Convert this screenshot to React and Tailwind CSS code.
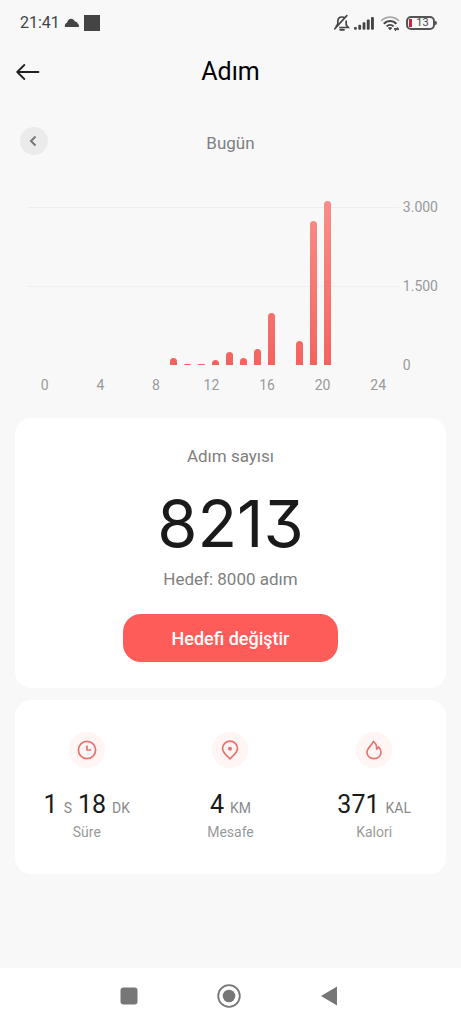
const MAX_STEPS = 3000

const hourlySteps = [
  0, 0, 0, 0, 0, 0, 0, 0, 0, 125, 20, 10, 95, 240, 140, 310, 990, 0, 460, 2730, 3110, 0, 0, 0,
]

const hourLabels = [0, 4, 8, 12, 16, 20, 24]
const stepLabels = ['3.000', '1.500', '0']

function StatusBar() {
  return (
    <div className="flex h-[46px] items-center justify-between px-5 text-[#444]">
      <div className="flex items-center">
        <span className="text-base leading-5">21:41</span>
        <svg className="ml-1 h-4 w-4" viewBox="0 0 16 16" fill="currentColor">
          <path d="M1 12C.4 9.800 1.300 8.200 3 7.700 3.800 5.200 5.300 3.700 7 3.700c1.800 0 3 1 3.900 2.700 1.700.3 2.600 1.100 2.900 2.300 1 .4 1.400 1.700 1 3.300z" />
        </svg>
        <span className="ml-1 h-4 w-4 bg-[#444]" />
      </div>

      <div className="flex items-center pr-1">
        {/* Muted bell */}
        <svg className="h-[18px] w-[18px]" viewBox="0 0 18 18" fill="none" stroke="currentColor" strokeWidth="1.700">
          <path d="M4.800 10V7.400C4.800 4.800 6.500 3 9 3c1.300 0 2.300.4 3 1.200M13.200 6.500v4.500l2 2.500H6.200" />
          <path d="M1.800 14.800 13.800 1.600" strokeLinecap="round" />
          <path d="M7.300 15.800h3.600" strokeWidth="2" strokeLinecap="round" />
          <path d="M5 10 2.800 12.800" />
        </svg>
        {/* Signal */}
        <svg className="ml-[3px] h-4 w-5" viewBox="0 0 20 16" fill="currentColor">
          <rect x="0" y="12" width="2.800" height="2.800" rx="1" />
          <rect x="4.300" y="9.800" width="2.800" height="5" rx="1" />
          <rect x="8.600" y="7.200" width="2.800" height="7.600" rx="1" />
          <rect x="12.800" y="4.600" width="2.900" height="10.200" rx="1" />
          <rect x="17" y="2" width="2.900" height="12.800" rx="1" />
        </svg>
        {/* Wi-Fi */}
        <svg className="ml-[6px] h-4 w-[22px]" viewBox="0 0 22 16" fill="none" stroke="currentColor">
          <path d="M1.200 6c4.800-5.200 13-5.200 17.800 0" stroke="#aaa" strokeWidth="1.800" />
          <path d="M3.800 8.700c3.500-3.600 9.100-3.600 12.600 0" strokeWidth="2.200" />
          <path d="M6.600 11.400c2-2 5-2 7 0" strokeWidth="2" />
          <path d="M7.900 13c1.300-1.200 3.100-1.200 4.400 0l-2.200 2.200z" fill="currentColor" stroke="none" />
          <path d="M14 13.600h4.500l-1.800-1.600M19 14.600h-4.500l1.600 1.400" strokeWidth="1" />
        </svg>
        {/* Battery */}
        <span className="ml-1 flex h-[14px] w-[29px] items-center rounded-[5px] border-2 border-[#555] pl-px">
          <span className="h-2 w-[3px] bg-[#c8283c]" />
          <span className="flex-1 text-center text-[11px] leading-[10px]">13</span>
        </span>
        <span className="h-1 w-[2px] rounded-r bg-[#555]" />
      </div>
    </div>
  )
}

function StepChart() {
  return (
    <section className="mt-11">
      <div className="flex h-[174px] pl-[27px] pr-[23px]">
        <div className="relative my-2 flex-1">
          <div className="absolute inset-0 flex flex-col justify-between">
            <div className="h-px bg-[#efefef]" />
            <div className="h-px bg-[#efefef]" />
            <div className="h-px" />
          </div>
          <div className="relative flex h-full items-end pl-[14px] pr-[23px]">
            {hourlySteps.map((steps, hour) => (
              <div key={hour} className="flex h-full flex-1 items-end justify-center">
                <div
                  className="w-[7px] rounded-t-full bg-[#f5625d] bg-linear-to-t from-[#f5625d] to-[#f98e89] bg-[length:100%_164px] bg-bottom bg-no-repeat"
                  style={{ height: `${(steps / MAX_STEPS) * 100}%` }}
                />
              </div>
            ))}
          </div>
        </div>
        <div className="ml-1 flex flex-col justify-between text-sm leading-4 text-[#9a9a9a]">
          {stepLabels.map((label) => (
            <span key={label}>{label}</span>
          ))}
        </div>
      </div>
      <div className="mt-1 grid grid-cols-7 pl-[17px] pr-[55px] text-center text-sm leading-4 text-[#9a9a9a]">
        {hourLabels.map((hour) => (
          <span key={hour}>{hour}</span>
        ))}
      </div>
    </section>
  )
}

function ClockIcon() {
  return (
    <svg className="h-5 w-5" viewBox="0 0 20 20" fill="none" stroke="currentColor" strokeWidth="1.700">
      <circle cx="10" cy="10" r="8.600" />
      <path d="M10 5.500V10h4.300" />
    </svg>
  )
}

function PinIcon() {
  return (
    <svg className="h-5 w-5" viewBox="0 0 20 20" fill="none" stroke="currentColor" strokeWidth="1.700">
      <path d="M10 18.800C6.500 15.400 2.500 12.500 2.500 8.500a7.500 7.300 0 0 1 15 0c0 4-4 6.900-7.500 10.300z" strokeLinejoin="round" />
      <circle cx="10" cy="8.700" r="2" fill="currentColor" stroke="none" />
    </svg>
  )
}

function FlameIcon() {
  return (
    <svg className="h-5 w-5" viewBox="0 0 20 20" fill="none" stroke="currentColor" strokeWidth="1.700">
      <path
        d="M9.300 1.400C8.300 5.200 3 7.600 3 12.200c0 3.900 3.100 6.500 7 6.500s7-2.600 7-6.500c0-1.800-.8-3.600-2.400-5.200l-1.900 2.200C12.900 5.900 11.500 3 9.300 1.400z"
        strokeLinejoin="round"
      />
    </svg>
  )
}

const stats = [
  { label: 'Süre', icon: ClockIcon, parts: [['1', 'S'], ['18', 'DK']] },
  { label: 'Mesafe', icon: PinIcon, parts: [['4', 'KM']] },
  { label: 'Kalori', icon: FlameIcon, parts: [['371', 'KAL']] },
]

function Stat({ label, icon: Icon, parts }) {
  return (
    <div className="flex flex-col items-center">
      <div className="flex h-9 w-9 items-center justify-center rounded-full bg-[#fef5f4] text-[#e8736f]">
        <Icon />
      </div>
      <div className="mt-[21px] flex items-baseline gap-[6px] whitespace-nowrap leading-8">
        {parts.map(([value, unit]) => (
          <span key={unit} className="flex items-baseline gap-[6px]">
            <span className="text-[25px] text-[#1a1a1a]">{value}</span>
            <span className="text-sm text-[#8a8a8a]">{unit}</span>
          </span>
        ))}
      </div>
      <div className="mt-px text-sm leading-5 text-[#9a9a9a]">{label}</div>
    </div>
  )
}

function NavBar() {
  return (
    <nav className="flex h-14 items-center justify-center gap-[76px] bg-white pr-1 text-[#777]">
      <button type="button" aria-label="Son uygulamalar">
        <svg className="h-6 w-6" viewBox="0 0 24 24" fill="currentColor">
          <rect x="3.500" y="3.500" width="17" height="17" rx="3" />
        </svg>
      </button>
      <button type="button" aria-label="Ana ekran">
        <svg className="h-6 w-6" viewBox="0 0 24 24">
          <circle cx="12" cy="12" r="10.800" fill="none" stroke="currentColor" strokeWidth="1.800" />
          <circle cx="12" cy="12" r="6.300" fill="currentColor" />
        </svg>
      </button>
      <button type="button" aria-label="Geri">
        <svg className="h-6 w-6" viewBox="0 0 24 24" fill="currentColor">
          <path d="M4 12 20 2.500v19z" />
        </svg>
      </button>
    </nav>
  )
}

export default function App() {
  return (
    <div className="flex min-h-screen flex-col bg-[#f8f8f8] font-['Roboto',sans-serif]">
      <StatusBar />

      <header className="grid h-[52px] grid-cols-[1fr_auto_1fr] items-center px-4">
        <button type="button" aria-label="Geri dön" className="justify-self-start">
          <svg className="h-6 w-6" viewBox="0 0 24 24" fill="none" stroke="#222" strokeWidth="1.800" strokeLinecap="round" strokeLinejoin="round">
            <path d="M22.500 12H1.200M8.300 5 1.200 12l7.100 7" />
          </svg>
        </button>
        <h1 className="text-[25px] leading-8 text-black">Adım</h1>
      </header>

      <main className="flex-1">
        <div className="mt-[29px] grid h-7 grid-cols-[1fr_auto_1fr] items-center px-5">
          <button type="button" aria-label="Önceki gün" className="flex h-7 w-7 items-center justify-center rounded-full bg-[#ebebeb]">
            <svg className="h-3 w-3" viewBox="0 0 12 12" fill="none" stroke="#777" strokeWidth="2">
              <path d="M7.500 1.500 3 6l4.500 4.500" />
            </svg>
          </button>
          <h2 className="pt-[3px] text-[17px] leading-6 text-[#808080]">Bugün</h2>
        </div>

        <StepChart />

        <section className="mx-[15px] mt-[25px] flex flex-col items-center rounded-2xl bg-white py-[26px]">
          <h2 className="text-[17px] leading-6 text-[#808080]">Adım sayısı</h2>
          <p className="mt-5 font-['Inter',sans-serif] text-[65px] leading-[72px] text-[#1a1a1a] [font-feature-settings:'cv09']">
            8213
          </p>
          <p className="mt-[7px] text-[17px] leading-6 text-[#808080]">Hedef: 8000 adım</p>
          <button type="button" className="mt-[23px] h-12 w-1/2 rounded-[18px] bg-[#fd5c58] pt-[2px] text-lg font-medium text-white">
            Hedefi değiştir
          </button>
        </section>

        <section className="mx-[15px] mt-3 grid grid-cols-3 rounded-2xl bg-white py-8">
          {stats.map((stat) => (
            <Stat key={stat.label} {...stat} />
          ))}
        </section>
      </main>

      <NavBar />
    </div>
  )
}
